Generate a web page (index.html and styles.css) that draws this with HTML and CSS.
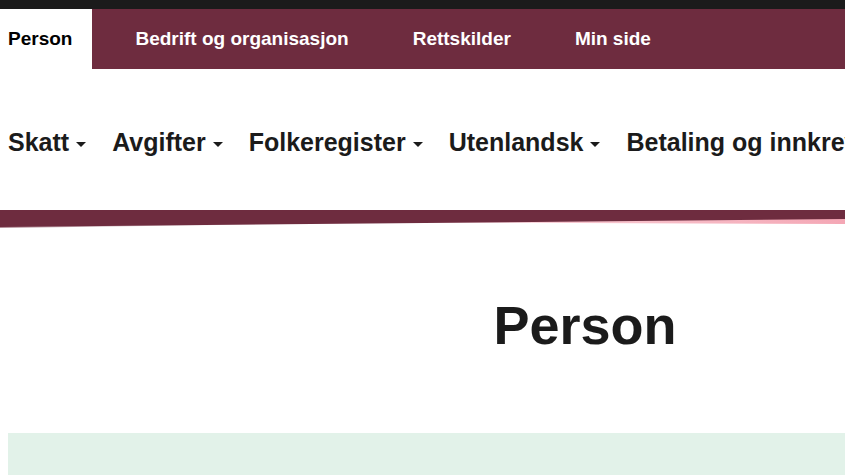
FILE: index.html
```html
<!DOCTYPE html>
<html lang="no">
<head>
    <meta charset="UTF-8">
    <meta name="viewport" content="width=device-width, initial-scale=1.0">
    <title>Person</title>
    <link rel="stylesheet" href="styles.css">
</head>
<body>
    <div class="topbar"></div>

    <div class="tabs">
        <a class="tab tab-active" href="#">Person</a>
        <a class="tab" href="#">Bedrift og organisasjon</a>
        <a class="tab" href="#">Rettskilder</a>
        <a class="tab" href="#">Min side</a>
    </div>

    <nav class="menu">
        <a class="menu-item" href="#">Skatt <span class="caret"></span></a>
        <a class="menu-item" href="#">Avgifter <span class="caret"></span></a>
        <a class="menu-item" href="#">Folkeregister <span class="caret"></span></a>
        <a class="menu-item" href="#">Utenlandsk <span class="caret"></span></a>
        <a class="menu-item" href="#">Betaling og innkreving <span class="caret"></span></a>
    </nav>

    <!-- dekorativ skr&aring; stripe -->
    <svg class="band" viewBox="0 0 845 18" preserveAspectRatio="none">
        <defs>
            <linearGradient id="pinkFade" x1="0" y1="0" x2="1" y2="0">
                <stop offset="0" stop-color="#f4a7b5" stop-opacity="0"/>
                <stop offset="0.5" stop-color="#f4a7b5" stop-opacity="0.6"/>
                <stop offset="1" stop-color="#f4a7b5"/>
            </linearGradient>
            <linearGradient id="greyFade" x1="0" y1="0" x2="1" y2="0">
                <stop offset="0" stop-color="#b08a95"/>
                <stop offset="1" stop-color="#ffffff" stop-opacity="0"/>
            </linearGradient>
        </defs>
        <polygon points="0,16 500,11 0,18" fill="url(#greyFade)"/>
        <polygon points="250,12 845,7 845,14" fill="url(#pinkFade)"/>
        <polygon points="0,0 845,0 845,9 0,17" fill="#6e2c3f"/>
    </svg>

    <main class="page">
        <h1 class="page-title">Person</h1>
        <div class="info-box"></div>
    </main>
</body>
</html>
```

FILE: styles.css
```css
* {
    padding: 0;
    margin: 0;
    box-sizing: border-box;
}

body {
    font-family: "Liberation Sans", Arial, sans-serif;
    color: #1b1b1b;
    background-color: #fff;
    overflow: hidden;
}

a {
    color: inherit;
    text-decoration: none;
}

.topbar {
    height: 9px;
    background-color: #1b1b1b;
}

.tabs {
    display: flex;
    height: 60px;
    background-color: #6e2c3f;
}

.tab {
    display: flex;
    align-items: center;
    padding: 0 32px;
    font-size: 19px;
    font-weight: bold;
    color: #fff;
    white-space: nowrap;
}

.tab-active {
    padding: 0 20px 0 8px;
    margin-right: 11px;
    background-color: #fff;
    color: #000;
}

.menu {
    display: flex;
    align-items: center;
    height: 141px;
    padding: 6px 0 0 8px;
    white-space: nowrap;
    overflow: hidden;
}

.menu-item {
    display: flex;
    align-items: center;
    margin-right: 26px;
    font-size: 25px;
    font-weight: bold;
    color: #1b1b1b;
}

.caret {
    display: inline-block;
    margin-left: 7px;
    margin-top: 3px;
    border-left: 5px solid transparent;
    border-right: 5px solid transparent;
    border-top: 5px solid #1b1b1b;
}

.band {
    display: block;
    width: 100%;
    height: 18px;
}

.page {
    width: 1170px;
}

.page-title {
    padding-top: 66px;
    height: 205px;
    text-align: center;
    font-size: 54px;
    font-weight: bold;
    color: #1b1b1b;
}

.info-box {
    margin-left: 8px;
    height: 120px;
    background-color: #e2f2e9;
}
```
